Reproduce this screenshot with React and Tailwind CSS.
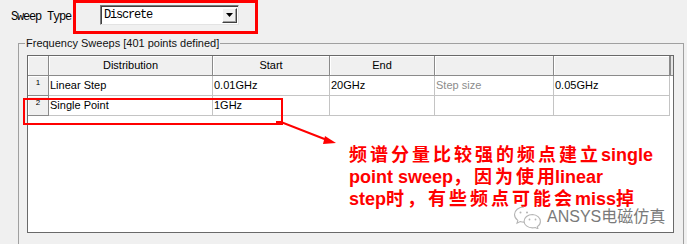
import React from 'react';

const cols = [
  { w: 'w-[164px]', head: 'Distribution' },
  { w: 'w-[117px]', head: 'Start' },
  { w: 'w-[105px]', head: 'End' },
  { w: 'w-[119px]', head: '' },
  { w: 'w-[116px]', head: '' },
];

const rows = [
  ['Linear Step', '0.01GHz', '20GHz', 'Step size', '0.05GHz'],
  ['Single Point', '1GHz', '', '', ''],
];

function Dropdown() {
  return (
    <div className="flex items-center w-[139px] h-[20px] bg-white border border-[#7a7a7a] border-b-[#e3e3e3] border-r-[#e3e3e3] shadow-[inset_1px_1px_0_#404040]">
      <span className="flex-1 pl-[3px] font-['Liberation_Mono',monospace] text-[12px] tracking-[-1.2px] text-black">
        Discrete
      </span>
      <div className="flex items-center justify-center w-[15px] h-[15px] mr-[1px] bg-[#f0f0f0] border border-white border-b-[#404040] border-r-[#404040] shadow-[inset_-1px_-1px_0_#a0a0a0]">
        <svg width="7" height="4" viewBox="0 0 7 4">
          <path d="M0 0h7L3.5 4z" fill="#000" />
        </svg>
      </div>
    </div>
  );
}

function WeChatIcon() {
  return (
    <svg width="30" height="24" viewBox="0 0 30 24" fill="none" stroke="#b5b5b5" strokeWidth="1.1">
      <path d="M11 2C5.5 2 1.5 5.5 1.5 9.6c0 2.4 1.3 4.4 3.3 5.8l-.8 2.8 3.2-1.7c1.2.4 2.5.6 3.8.6" />
      <circle cx="7.5" cy="7.6" r="1" fill="#b5b5b5" stroke="none" />
      <circle cx="14" cy="7.6" r="1" fill="#b5b5b5" stroke="none" />
      <path d="M19.5 9.5c-4.8 0-8.4 3-8.4 6.7s3.6 6.7 8.4 6.7c1 0 2-.1 2.9-.4l2.6 1.4-.7-2.3c1.9-1.2 3.1-3.1 3.1-5.2 0-3.7-3.6-6.7-7.9-6.9z" />
      <circle cx="16.5" cy="14.5" r="0.9" fill="#b5b5b5" stroke="none" />
      <circle cx="22.5" cy="14.5" r="0.9" fill="#b5b5b5" stroke="none" />
    </svg>
  );
}

function App() {
  return (
    <div className="relative w-[687px] h-[244px] overflow-hidden bg-[#f0f0f0] font-['Liberation_Sans',sans-serif] text-[11px] text-black">
      {/* sweep type */}
      <div className="flex items-start h-[36px]">
        <span className="ml-[11px] mt-[8px] w-[62px] font-['Liberation_Mono',monospace] text-[12px] tracking-[-1.2px] whitespace-nowrap">
          Sweep Type
        </span>
        <div className="w-[185px] h-[34px] border-[3px] border-[#ff0000] pl-[24px] pt-[2px]">
          <Dropdown />
        </div>
      </div>

      {/* group box */}
      <fieldset className="ml-[18px] w-[666px] border border-[#a0a0a0] px-[8px] pt-[5px] pb-[30px]">
        <legend className="-ml-[2px] px-[1px] text-[11px] leading-[14px] text-[#111]">
          Frequency Sweeps [401 points defined]
        </legend>
        <div className="w-[647px] h-[178px] bg-white border border-[#696969]">
          <div className="flex h-[20px]">
            <div className="w-[21px] bg-[#f0f0f0] border-r border-b border-[#8a8a8a] shadow-[inset_1px_1px_0_#fff]" />
            {cols.map((c, i) => (
              <div
                key={i}
                className={`${c.w} flex items-center justify-center bg-[#f0f0f0] border-r border-b border-[#8a8a8a] shadow-[inset_1px_1px_0_#fff]`}
              >
                {c.head}
              </div>
            ))}
            <div className="w-[3px] bg-[#e4e4e4] border-b border-l border-[#8a8a8a]" />
          </div>
          {rows.map((r, ri) => (
            <div key={ri} className="flex h-[20px]">
              <div className="w-[21px] flex justify-center pt-[2px] bg-[#f0f0f0] border-r border-b border-[#8a8a8a] shadow-[inset_1px_1px_0_#fff] text-[8px] leading-[10px]">
                {ri + 1}
              </div>
              {r.map((v, ci) => (
                <div
                  key={ci}
                  className={`${cols[ci].w} flex items-center pl-[1px] border-r border-b border-[#c4c4c4] ${v === 'Step size' ? 'text-[#8c8c8c]' : ''}`}
                >
                  {v}
                </div>
              ))}
              <div className="w-[3px]" />
            </div>
          ))}
        </div>
      </fieldset>

      {/* annotations */}
      <div className="absolute left-[23px] top-[98px] w-[260px] h-[27px] border-2 border-[#ff0000]" />
      <svg className="absolute left-0 top-0 pointer-events-none" width="687" height="244">
        <path d="M276 122h5l46 18" stroke="#ff0000" strokeWidth="2" fill="none" />
        <path d="M325 136l11 7-13 1z" fill="#ff0000" />
      </svg>
      <div className="absolute left-[349px] top-[144px] text-[18px] leading-[22px] font-bold text-[#ff0000] font-['Liberation_Sans','Noto_Sans_CJK_SC',sans-serif] whitespace-nowrap">
        <div>
          <span className="tracking-[3px]">频谱分量比较强的频点建立</span>single
        </div>
        <div>
          point sweep<span className="tracking-[3px]">，因为使</span>用linear
        </div>
        <div>
          step<span className="tracking-[3px]">时，有些频点可能会</span>miss<span>掉</span>
        </div>
      </div>
      <div className="absolute left-[513px] top-[205px] flex items-center gap-[4px]">
        <WeChatIcon />
        <span className="text-[16px] leading-[20px] text-[#7a7a7a] font-['Liberation_Sans','Noto_Sans_CJK_SC',sans-serif]">
          ANSYS电磁仿真
        </span>
      </div>
    </div>
  );
}

export default App;
